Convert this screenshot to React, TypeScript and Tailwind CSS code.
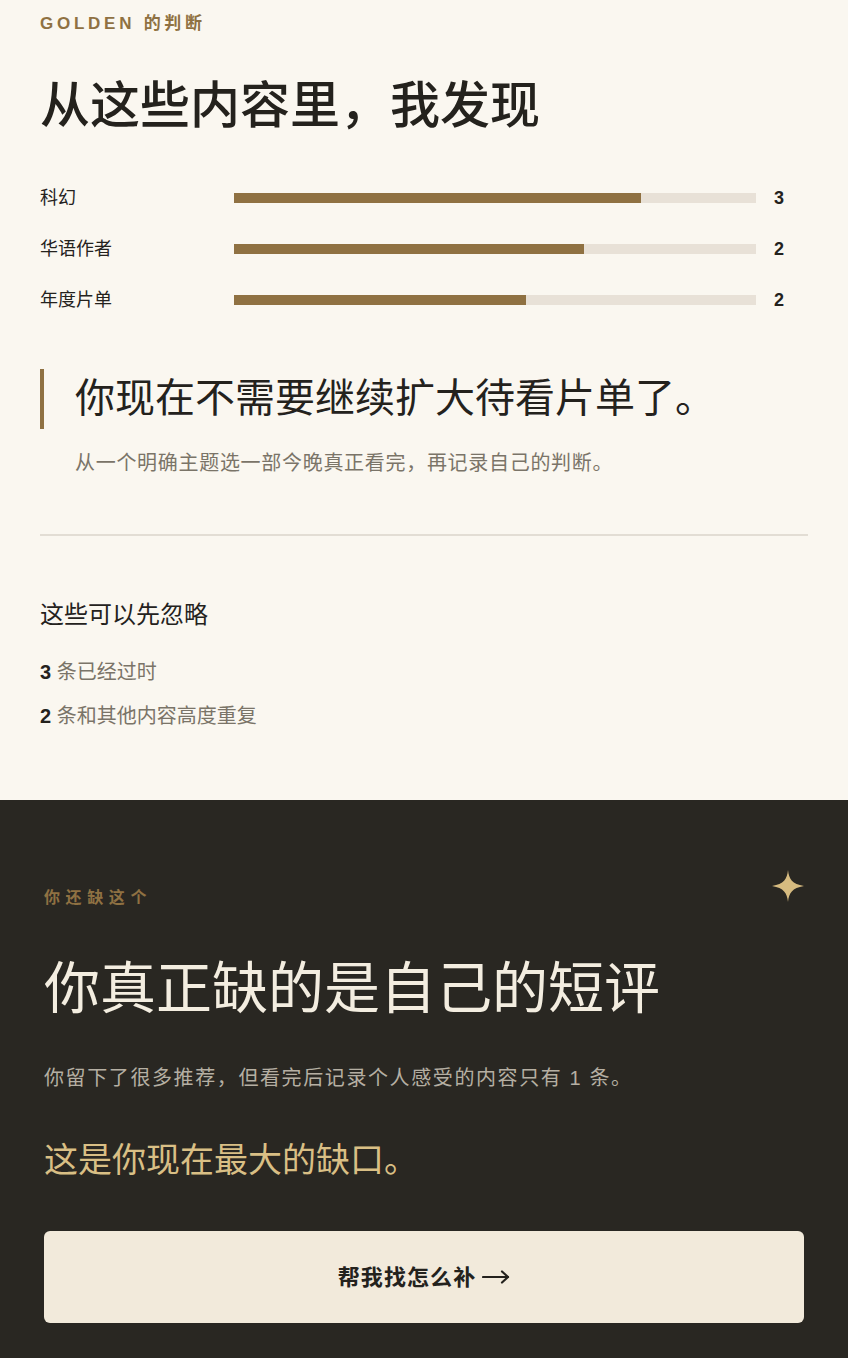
const sans = 'font-["Liberation_Sans","Noto_Sans_CJK_SC",sans-serif]';
const serif = 'font-["Liberation_Serif","Noto_Sans_CJK_SC",serif]';

const stats = [
  { label: '科幻', count: 3, pct: 78 },
  { label: '华语作者', count: 2, pct: 67 },
  { label: '年度片单', count: 2, pct: 56 },
];

function StarMark() {
  return (
    <svg width="32" height="32" viewBox="0 0 32 32" className="text-[#d6bb80]">
      <path d="M16 0 C17 9 20 14 32 16 C20 18 17 23 16 32 C15 23 12 18 0 16 C12 14 15 9 16 0 Z" fill="currentColor" />
    </svg>
  );
}

function LongArrow() {
  return (
    <svg width="28" height="14" viewBox="0 0 28 14" fill="none" stroke="currentColor" strokeWidth="2.2" strokeLinecap="round" strokeLinejoin="round">
      <path d="M1 7 H26" />
      <path d="M20 1.5 L26 7 L20 12.5" />
    </svg>
  );
}

export default function App() {
  return (
    <div className={`${sans} bg-[#faf7f0] min-h-screen w-full flex flex-col`}>
      {/* Judgement */}
      <section className="px-10 pt-[12px] pb-[70px]">
        <p className="text-[17px] font-bold tracking-[0.22em] text-[#8f7142] leading-6">GOLDEN 的判断</p>
        <h1 className={`${serif} mt-[38px] text-[50px] leading-[64px] text-[#24221d] font-medium`}>从这些内容里，我发现</h1>

        <div className="mt-[48px] flex flex-col gap-[27px]">
          {stats.map((s) => (
            <div key={s.label} className="flex items-center h-6">
              <span className="w-[194px] text-[18px] text-[#24221d]">{s.label}</span>
              <div className="w-[522px] h-[10px] bg-[#e8e1d7]">
                <div className="h-full bg-[#8f7142]" style={{ width: `${s.pct}%` }} />
              </div>
              <span className="ml-[18px] text-[18px] font-bold text-[#24221d]">{s.count}</span>
            </div>
          ))}
        </div>

        <div className="mt-[57px]">
          <div className="border-l-4 border-[#8f7142] pl-[31px] h-[60px] flex items-center">
            <p className={`${serif} text-[40px] leading-[52px] text-[#24221d]`}>你现在不需要继续扩大待看片单了。</p>
          </div>
          <p className="mt-[20px] pl-[35px] text-[20px] tracking-[0.035em] leading-7 text-[#7a7468]">从一个明确主题选一部今晚真正看完，再记录自己的判断。</p>
        </div>

        <div className="mt-[57px] h-[2px] bg-[#e2ddd4]" />

        <h2 className="mt-[63px] text-[24px] leading-8 text-[#24221d]">这些可以先忽略</h2>
        <ul className="mt-[27px] flex flex-col gap-4 text-[20px] leading-7">
          <li className="text-[#7a7468]"><span className="font-bold text-[#24221d]">3</span> 条已经过时</li>
          <li className="text-[#7a7468]"><span className="font-bold text-[#24221d]">2</span> 条和其他内容高度重复</li>
        </ul>
      </section>

      {/* Gap */}
      <section className="flex-1 bg-[#292722] px-[44px] pt-[68px] pb-[35px]">
        <div className="flex items-start justify-between">
          <p className="mt-[18px] text-[16px] font-bold tracking-[0.35em] text-[#8f7142] leading-6">你还缺这个</p>
          <div className="mt-[2px]">
            <StarMark />
          </div>
        </div>
        <h2 className={`${serif} mt-[43px] text-[56px] leading-[72px] text-[#f3ede0]`}>你真正缺的是自己的短评</h2>
        <p className="mt-[37px] text-[20px] tracking-[0.08em] leading-8 text-[#b5afa3]">你留下了很多推荐，但看完后记录个人感受的内容只有 1 条。</p>
        <p className={`${serif} mt-[43px] text-[34px] leading-[48px] text-[#d9bf85]`}>这是你现在最大的缺口。</p>
        <button className="mt-[46px] w-full h-[92px] rounded-md bg-[#f2eadb] text-[22px] font-bold tracking-[0.05em] text-[#24221d] flex items-center justify-center gap-[6px]">
          帮我找怎么补
          <LongArrow />
        </button>
      </section>
    </div>
  );
}
